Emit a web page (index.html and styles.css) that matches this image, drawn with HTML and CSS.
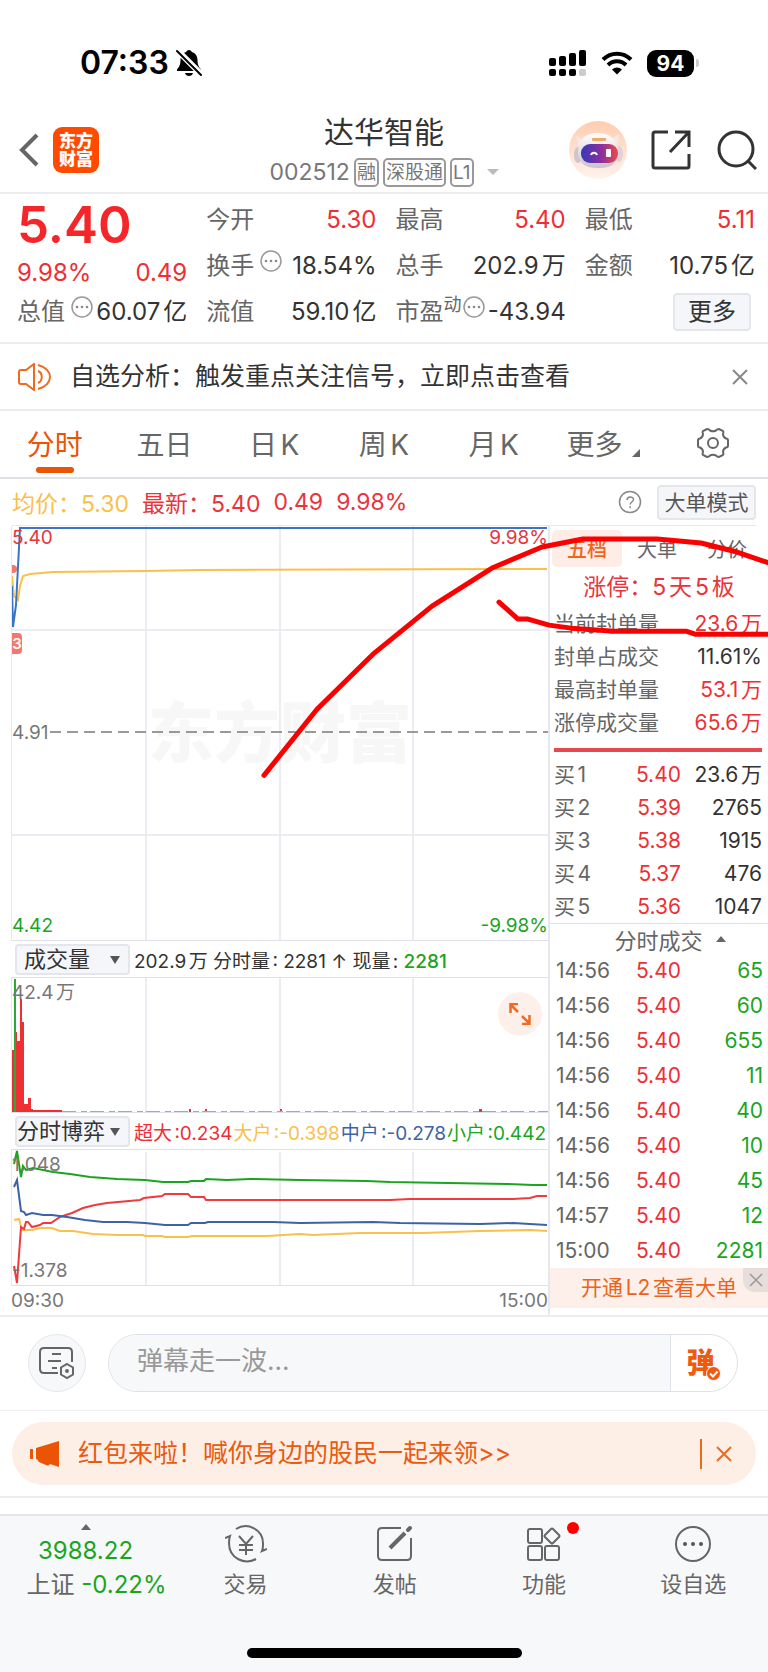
FILE: index.html
```html
<!DOCTYPE html>
<html lang="zh-CN">
<head>
    <meta charset="UTF-8">
    <meta name="viewport" content="width=device-width, initial-scale=1.0">
    <title>达华智能 002512</title>
    <link rel="stylesheet" href="styles.css">
</head>
<body>
    <div class="status-bar">
        <div class="status-left">
            <span class="clock">07:33</span>
            <svg width="26" height="28" viewBox="0 0 26 28">
                <path d="M13 1c-1.500 0-2.500 1-2.800 2C6.500 4 4.500 7 4.500 11c0 5-1.500 7-3.500 9.500V22h24v-1.500C23 18 21.500 16 21.500 11c0-4-2-7-5.700-8C15.500 2 14.500 1 13 1zM9 24h8c-.5 2-2 3-4 3s-3.500-1-4-3z"/>
                <path d="M0 0l26 26" stroke="#fff" stroke-width="6"/>
                <path d="M1 2l24 24" stroke="#000" stroke-width="2" stroke-linecap="round"/>
            </svg>
        </div>
        <div class="status-right">
            <svg width="38" height="28" viewBox="0 0 38 28">
                <rect x="0" y="9" width="7" height="8" rx="2"/>
                <rect x="10" y="7" width="7" height="10" rx="2"/>
                <rect x="20" y="4" width="7" height="13" rx="2"/>
                <rect x="30" y="1" width="7" height="16" rx="2"/>
                <rect x="0" y="20" width="7" height="7" rx="2"/>
                <rect x="10" y="20" width="7" height="7" rx="2"/>
                <rect x="20" y="20" width="7" height="7" rx="2"/>
                <rect x="30" y="20" width="7" height="7" rx="2" fill="#ccc"/>
            </svg>
            <svg class="wifi" width="32" height="24" viewBox="0 0 32 24" fill="none" stroke="#000" stroke-width="4">
                <path d="M2 8.500C10 .7 22 .7 30 8.500"/>
                <path d="M7 14c5-5 13-5 18 0"/>
                <path d="M16 23.500l-5-5c3-2.700 7-2.700 10 0z" fill="#000" stroke="none"/>
            </svg>
            <span class="battery">94</span>
            <span class="battery-tip"></span>
        </div>
    </div>

    <header class="header">
        <div class="header-left">
            <button class="icon-btn" aria-label="返回">
                <svg width="20" height="34" viewBox="0 0 20 34" fill="none" stroke="#666" stroke-width="4"><path d="M18 2L3 17l15 15"/></svg>
            </button>
            <span class="logo">东方<br>财富</span>
        </div>
        <div class="header-title">
            <h1>达华智能</h1>
            <div class="stock-code">
                <span>002512</span>
                <span class="tag">融</span>
                <span class="tag">深股通</span>
                <span class="tag">L1</span>
                <span class="caret"></span>
            </div>
        </div>
        <div class="header-right">
            <button class="icon-btn" aria-label="助手">
                <svg width="58" height="58" viewBox="0 0 58 58">
                    <defs>
                        <linearGradient id="halo" x1="0" y1="0" x2="0" y2="1"><stop offset="0" stop-color="#ffcdb0"/><stop offset="1" stop-color="#fff3ec"/></linearGradient>
                        <linearGradient id="visor"><stop offset="0" stop-color="#3a38b8"/><stop offset=".55" stop-color="#8a2f9e"/><stop offset="1" stop-color="#ee4a4a"/></linearGradient>
                        <linearGradient id="shell" x1="0" y1="0" x2="0" y2="1"><stop offset="0" stop-color="#fff"/><stop offset="1" stop-color="#c9c3cc"/></linearGradient>
                    </defs>
                    <circle cx="29" cy="29" r="29" fill="url(#halo)"/>
                    <path d="M7 15l9 4-7 6zM50 13l-8 5 7 6z" fill="#f4e7e4"/>
                    <ellipse cx="9" cy="34" rx="4" ry="8" fill="#cfc4ca"/>
                    <ellipse cx="50" cy="33" rx="4" ry="8" fill="#ddd3d8"/>
                    <path d="M9 31C9 17 18 12 29 12s20 6 20 19-8 16-20 16S9 43 9 31z" fill="url(#shell)"/>
                    <rect x="23" y="17" width="14" height="3" rx="1" fill="#f0a867"/>
                    <rect x="12" y="23" width="37" height="19" rx="9" fill="url(#visor)"/>
                    <path d="M22 34c1-3 5-3 6 0" fill="none" stroke="#fff" stroke-width="2"/>
                    <rect x="37" y="28" width="5" height="8" rx="1" fill="#fff"/>
                </svg>
            </button>
            <button class="icon-btn" aria-label="分享">
                <svg width="40" height="40" viewBox="0 0 40 40" fill="none" stroke="#333" stroke-width="3">
                    <path d="M17 2H4q-2 0-2 2v32q0 2 2 2h32q2 0 2-2V24M19 22L37 3M24 2h14v15"/>
                </svg>
            </button>
            <button class="icon-btn" aria-label="搜索">
                <svg width="40" height="40" viewBox="0 0 40 40" fill="none" stroke="#333" stroke-width="3">
                    <circle cx="19" cy="19" r="17"/><path d="M31 31l8 8"/>
                </svg>
            </button>
        </div>
    </header>

    <section class="quote">
        <div class="quote-col">
            <div class="price">5.40</div>
            <div class="quote-row change"><span>9.98%</span><span>0.49</span></div>
            <div class="quote-row">
                <span class="name">总值<svg class="info" viewBox="0 0 22 22"><use href="#more"/></svg></span><span>60.07亿</span>
            </div>
        </div>
        <div class="quote-col">
            <div class="quote-row"><span class="name">今开</span><span class="up">5.30</span></div>
            <div class="quote-row"><span class="name">换手<svg class="info gap" viewBox="0 0 22 22"><use href="#more"/></svg></span><span>18.54%</span></div>
            <div class="quote-row"><span class="name">流值</span><span>59.10亿</span></div>
        </div>
        <div class="quote-col">
            <div class="quote-row"><span class="name">最高</span><span class="up">5.40</span></div>
            <div class="quote-row"><span class="name">总手</span><span>202.9万</span></div>
            <div class="quote-row"><span class="name">市盈<small>动</small><svg class="info tight" viewBox="0 0 22 22"><use href="#more"/></svg></span><span>-43.94</span></div>
        </div>
        <div class="quote-col">
            <div class="quote-row"><span class="name">最低</span><span class="up">5.11</span></div>
            <div class="quote-row"><span class="name">金额</span><span>10.75亿</span></div>
            <div class="quote-row quote-more"><button class="btn more-btn">更多</button></div>
        </div>
    </section>

    <svg class="defs">
        <symbol id="more" viewBox="0 0 22 22">
            <circle cx="11" cy="11" r="10" fill="none" stroke="#999" stroke-width="1.500"/>
            <circle cx="6" cy="11" r="1.300" fill="#888"/><circle cx="11" cy="11" r="1.300" fill="#888"/><circle cx="16" cy="11" r="1.300" fill="#888"/>
        </symbol>
    </svg>

    <div class="notice">
        <svg width="34" height="28" viewBox="0 0 34 28" fill="none" stroke="#ee6a1f" stroke-width="2">
            <path d="M16 1v26L8 21H3q-2 0-2-2V9q0-2 2-2h5z"/>
            <path d="M20 8c5 2 5 10 0 12M20 2c16 4 16 20 0 24"/>
        </svg>
        <p>自选分析：触发重点关注信号，立即点击查看</p>
        <button class="icon-btn" aria-label="关闭">
            <svg width="16" height="16" viewBox="0 0 16 16" stroke="#888" stroke-width="2"><path d="M1 1l14 14M15 1L1 15"/></svg>
        </button>
    </div>

    <nav class="tabs">
        <button class="tab active">分时</button>
        <button class="tab">五日</button>
        <button class="tab">日K</button>
        <button class="tab">周K</button>
        <button class="tab">月K</button>
        <button class="tab">更多<span class="corner"></span></button>
        <button class="tab" aria-label="设置">
            <svg width="32" height="32" viewBox="0 0 32 32" fill="none" stroke="#666" stroke-width="2">
                <path d="M10 2q2 0 3 1.500 3 1.500 6 0Q20 2 22 2l4 2q1 1 0 3 0 3 3 4.500 2 0 2 2v5q0 2-2 2-3 1.500-3 4.500 1 2 0 3l-4 2q-2 0-3-1.500-3-1.500-6 0Q12 30 10 30l-4-2q-1-1 0-3 0-3-3-4.500-2 0-2-2v-5q0-2 2-2Q6 10 6 7 5 5 6 4z"/>
                <circle cx="16" cy="16" r="5"/>
            </svg>
        </button>
    </nav>

    <div class="avg-line">
        <span class="avg">均价：5.30</span>
        <span class="latest">最新：5.40</span>
        <span class="latest">0.49</span>
        <span class="latest">9.98%</span>
        <span class="avg-tools">
            <button class="icon-btn" aria-label="帮助">
                <svg width="24" height="24" viewBox="0 0 24 24" fill="none" stroke="#888" stroke-width="1.500">
                    <circle cx="12" cy="12" r="10.500"/>
                    <path d="M9 10c0-4 6.500-4 6.500-.5 0 2.500-3.300 2.500-3.300 5M12.200 16.200v2"/>
                </svg>
            </button>
            <button class="btn mode-btn">大单模式</button>
        </span>
    </div>

    <main class="market">
        <div class="charts">
            <div class="chart price-chart">
                <span class="watermark">东方财富</span>
                <svg class="plot" viewBox="0 0 536 414" preserveAspectRatio="none" fill="none">
                    <path d="M134 0V414M268 0V414M401 0V414M0 104H536M0 309H536" stroke="#e6e7f0" stroke-width="1.500"/>
                    <path d="M38 206H536" stroke="#999" stroke-width="2" stroke-dasharray="11 6"/>
                    <circle cx="1" cy="43" r="4" fill="#f4766c"/>
                    <polyline points="0,50 2,70 6,74 8,60 11,50 18,48 41,46 133,45 188,44 535,43" stroke="#fac04c" stroke-width="2"/>
                    <polyline points="0,60 1,101 4,79 8,2 535,2" stroke="#3a75c4" stroke-width="2"/>
                </svg>
                <span class="axis top left up">5.40</span>
                <span class="axis top right up">9.98%</span>
                <span class="axis middle left">4.91</span>
                <span class="axis bottom left down">4.42</span>
                <span class="axis bottom right down">-9.98%</span>
                <span class="buy-mark">3</span>
            </div>

            <div class="chart-head">
                <span class="picker"><select aria-label="指标一"><option>成交量</option></select></span>
                <span>202.9万 分时量: 2281 ↑ 现量: <b class="down">2281</b></span>
            </div>
            <div class="chart volume-chart">
                <svg class="plot" viewBox="0 0 536 134" preserveAspectRatio="none">
                    <path d="M134 0V134M268 0V134M401 0V134" stroke="#e6e7f0" stroke-width="1.500"/>
                    <g fill="#ef2f33">
                        <rect x="0" y="72" width="2" height="62"/>
                        <rect x="3" y="54" width="2" height="80"/>
                        <rect x="5" y="63" width="3" height="71"/>
                        <rect x="8" y="21" width="2" height="113"/>
                        <rect x="10" y="44" width="2" height="90"/>
                        <rect x="12" y="126" width="4" height="8"/>
                        <rect x="16" y="120" width="3" height="14"/>
                        <rect x="19" y="131" width="2" height="3"/>
                        <rect x="21" y="132" width="29" height="2"/>
                        <rect x="177" y="131" width="2" height="3"/>
                        <rect x="193" y="131" width="2" height="3"/>
                        <rect x="268" y="131" width="2" height="3"/>
                        <rect x="467" y="131" width="3" height="3"/>
                    </g>
                    <path d="M50 133.500H536" stroke="#f0898b" stroke-dasharray="14 5 6 3"/>
                    <rect x="2" y="1" width="2" height="133" fill="#2ea836"/>
                </svg>
                <span class="axis high left">42.4万</span>
                <button class="expand" aria-label="放大">
                    <svg width="22" height="22" viewBox="0 0 22 22" fill="none" stroke="#f06a24" stroke-width="2.500">
                        <path d="M9 1H1.500v9M2 2l7 7M13 21h7.500v-9M20 20l-7-7"/>
                    </svg>
                </button>
            </div>

            <div class="chart-head">
                <span class="picker wide"><select aria-label="指标二"><option>分时博弈</option></select></span>
                <span class="flows">
                    <span class="up">超大:0.234</span>
                    <span class="big">大户:-0.398</span>
                    <span class="mid">中户:-0.278</span>
                    <span class="down">小户:0.442</span>
                </span>
            </div>
            <div class="chart flow-chart">
                <svg class="plot" viewBox="0 0 536 135" preserveAspectRatio="none">
                    <path d="M134 2V135M268 2V135M401 2V135" stroke="#e6e7f0" stroke-width="1.500"/>
                    <g fill="none" stroke-width="2">
                        <polyline stroke="#fac04c" points="2,70 7,69 10,80 20,80 28,78 40,78 48,81 61,81 81,84 105,85 131,85 133,86 150,86 153,87 176,87 180,86 255,86 288,84 301,85 348,83 375,83 411,83 468,81 518,80 535,81"/>
                        <polyline stroke="#ef3a3e" points="2,116 5,133 9,77 12,79 14,72 16,72 20,77 28,75 31,73 39,73 48,67 60,63 71,58 83,55 95,53 128,50 132,48 150,46 153,44 176,44 179,47 192,47 194,50 288,50 378,50 398,49 501,49 518,48 525,46 535,46"/>
                        <polyline stroke="#3d62a5" points="2,37 5,30 9,61 12,62 14,65 20,63 31,65 40,65 55,67 73,70 91,72 115,72 133,73 153,75 176,75 179,73 193,73 196,72 261,72 288,73 361,72 388,73 468,74 501,73 535,75"/>
                        <polyline stroke="#1ba51f" points="2,14 5,1 9,27 11,16 14,20 21,18 41,22 58,24 78,27 105,29 133,30 151,32 176,32 179,31 192,31 194,29 215,30 238,29 288,30 355,31 378,32 495,34 521,35 535,35"/>
                    </g>
                </svg>
                <span class="axis high left">1.048</span>
                <span class="axis bottom left">-1.378</span>
            </div>
            <div class="times"><span>09:30</span><span>15:00</span></div>
        </div>

        <aside class="side">
            <div class="side-tabs">
                <button class="side-tab active">五档</button>
                <button class="side-tab">大单</button>
                <button class="side-tab">分价</button>
            </div>
            <div class="streak">涨停：5天5板</div>
            <table class="side-table seal">
                <tr><td>当前封单量</td><td class="up">23.6万</td></tr>
                <tr><td>封单占成交</td><td>11.61%</td></tr>
                <tr><td>最高封单量</td><td class="up">53.1万</td></tr>
                <tr><td>涨停成交量</td><td class="up">65.6万</td></tr>
            </table>
            <div class="bar"></div>
            <table class="side-table bids">
                <tr><td>买1</td><td class="up">5.40</td><td>23.6万</td></tr>
                <tr><td>买2</td><td class="up">5.39</td><td>2765</td></tr>
                <tr><td>买3</td><td class="up">5.38</td><td>1915</td></tr>
                <tr><td>买4</td><td class="up">5.37</td><td>476</td></tr>
                <tr><td>买5</td><td class="up">5.36</td><td>1047</td></tr>
            </table>
            <button class="trades-head">分时成交<span class="caret-up"></span></button>
            <table class="side-table trades">
                <tr><td>14:56</td><td class="up">5.40</td><td class="down">65</td></tr>
                <tr><td>14:56</td><td class="up">5.40</td><td class="down">60</td></tr>
                <tr><td>14:56</td><td class="up">5.40</td><td class="down">655</td></tr>
                <tr><td>14:56</td><td class="up">5.40</td><td class="down">11</td></tr>
                <tr><td>14:56</td><td class="up">5.40</td><td class="down">40</td></tr>
                <tr><td>14:56</td><td class="up">5.40</td><td class="down">10</td></tr>
                <tr><td>14:56</td><td class="up">5.40</td><td class="down">45</td></tr>
                <tr><td>14:57</td><td class="up">5.40</td><td class="down">12</td></tr>
                <tr><td>15:00</td><td class="up">5.40</td><td class="down">2281</td></tr>
            </table>
            <div class="level2">
                <a href="#">开通L2查看大单</a>
                <button class="level2-close" aria-label="关闭">
                    <svg width="14" height="14" viewBox="0 0 14 14" stroke="#999" stroke-width="1.500"><path d="M1 1l12 12M13 1L1 13"/></svg>
                </button>
            </div>
        </aside>

        <!-- hand-drawn marker strokes -->
        <svg class="marker" viewBox="0 0 768 788" preserveAspectRatio="none" fill="none" stroke="#fb0000" stroke-width="5" stroke-linecap="round" stroke-linejoin="round">
            <polyline points="264,249 317,183 373,128 432,80 492,42 542,21 583,13 657,13 701,17 737,26 772,38"/>
            <polyline points="499,76 518,93 528,93 549,99 571,102 614,105 686,105 695,108 772,108"/>
        </svg>
    </main>

    <div class="comment">
        <button class="round-btn" aria-label="弹幕设置">
            <svg width="36" height="34" viewBox="0 0 36 34" fill="none" stroke="#666" stroke-width="2">
                <path d="M33 16V6q0-4-4-4H5Q1 2 1 6v17q0 4 4 4h14M13 8h9M9 15h13M13 22h5" />
                <path d="M28 18l6 3.500v7L28 32l-6-3.500v-7z"/><circle cx="28" cy="25" r="1" />
            </svg>
        </button>
        <div class="comment-box">
            <input type="text" placeholder="弹幕走一波..." aria-label="弹幕">
            <button class="danmu" aria-label="弹幕开关">弹<svg width="15" height="15" viewBox="0 0 15 15"><circle cx="7.500" cy="7.500" r="7" fill="#ee5a12" stroke="#fff"/><path d="M4 7.500l3 3 4.500-5" fill="none" stroke="#fff" stroke-width="2"/></svg></button>
        </div>
    </div>

    <div class="promo-wrap">
        <div class="promo">
            <svg width="30" height="26" viewBox="0 0 30 26" fill="#ea5404">
                <path d="M0 8h3v10H0zM6 7L29 0v26l-9-3q-1 2-3 1.500L9 21q-1-.5-1-2l-2-1z"/>
            </svg>
            <a href="#">红包来啦！喊你身边的股民一起来领&gt;&gt;</a>
            <button class="icon-btn promo-close" aria-label="关闭">
                <svg width="16" height="16" viewBox="0 0 16 16" stroke="#ee6a1f" stroke-width="2"><path d="M1 1l14 14M15 1L1 15"/></svg>
            </button>
        </div>
    </div>

    <footer class="footer">
        <nav class="bottom-nav">
            <button class="index">
                <span class="caret-up"></span>
                <span class="index-value down">3988.22</span>
                <span class="index-change">上证 <span class="down">-0.22%</span></span>
            </button>
            <button class="nav-item">
                <svg width="42" height="38" viewBox="0 0 42 38" fill="none" stroke="#666" stroke-width="2">
                    <path d="M11 4C22-3 39 4 38 20q0 4-1 6l5-2M31 34C20 40 4 34 4 18q0-4 1-7L0 13"/>
                    <path d="M14 11l7 8 7-8M14 20h14M14 25h14M21 19v11"/>
                </svg>
                <span>交易</span>
            </button>
            <button class="nav-item">
                <svg width="38" height="38" viewBox="0 0 38 38" fill="none" stroke="#666" stroke-width="2">
                    <path d="M25 3H6Q2 3 2 7v24q0 4 4 4h25q4 0 4-4V13"/>
                    <path d="M14 23L29 8" stroke-width="4"/><path d="M32 5l2-2" stroke-width="4" stroke-linecap="round"/>
                </svg>
                <span>发帖</span>
            </button>
            <button class="nav-item">
                <svg width="38" height="38" viewBox="0 0 38 38" fill="none" stroke="#666" stroke-width="2">
                    <rect x="3" y="4" width="14" height="14" rx="2"/><rect x="3" y="21" width="14" height="14" rx="2"/><rect x="20" y="21" width="14" height="14" rx="2"/>
                    <path d="M26 4q1-1 2 0l6 6q1 1 0 2l-6 6q-1 1-2 0l-6-6q-1-1 0-2z"/>
                </svg>
                <span>功能</span>
                <i class="dot"></i>
            </button>
            <button class="nav-item">
                <svg width="38" height="38" viewBox="0 0 38 38">
                    <circle cx="19" cy="19" r="17" fill="none" stroke="#666" stroke-width="2"/>
                    <g fill="#555"><circle cx="11" cy="19" r="2"/><circle cx="19" cy="19" r="2"/><circle cx="27" cy="19" r="2"/></g>
                </svg>
                <span>设自选</span>
            </button>
        </nav>
        <div class="home-bar"></div>
    </footer>
</body>
</html>
```

FILE: styles.css
```css
* {
    box-sizing: border-box;
}
body {
    margin: 0;
    background-color: #fff;
    color: #333;
    font-family: Inter, "Noto Sans CJK SC", sans-serif;
    font-size: 24px;
    text-autospace: normal;
}
button, input, select {
    font-family: inherit;
    font-size: inherit;
    color: inherit;
    text-autospace: inherit;
}
button {
    border: none;
    background: none;
    padding: 0;
    cursor: pointer;
}
svg {
    display: block;
    flex: none;
}
a {
    color: inherit;
    text-decoration: none;
}
h1, p {
    margin: 0;
    font-weight: normal;
}
.up {
    color: #ee2f34;
}
.down {
    color: #1ba51f;
}
.defs {
    position: absolute;
    width: 0;
    height: 0;
}
.icon-btn {
    display: flex;
}

/* status bar */
.status-bar {
    display: flex;
    justify-content: space-between;
    padding: 43px 69px 0 80px;
    height: 102px;
    color: #000;
}
.status-left, .status-right {
    display: flex;
    align-items: center;
    height: 40px;
}
.status-left {
    gap: 7px;
}
.clock {
    font-size: 32px;
    line-height: 40px;
    font-weight: 600;
}
.wifi {
    margin: 0 14px;
}
.battery {
    width: 47px;
    border-radius: 9px;
    background-color: #000;
    color: #fff;
    font-size: 21px;
    line-height: 27px;
    font-weight: 700;
    text-align: center;
}
.battery-tip {
    width: 3px;
    height: 8px;
    margin-left: 2px;
    border-radius: 0 3px 3px 0;
    background-color: #ccc;
}

/* header */
.header {
    display: grid;
    grid-template-columns: 1fr auto 1fr;
    padding: 8px 0 2px;
    border-bottom: 2px solid #ededf0;
}
.header-left, .header-right {
    display: flex;
    align-items: center;
}
.header-left {
    gap: 14px;
    padding-left: 19px;
}
.header-right {
    justify-content: flex-end;
    gap: 24px;
    padding-right: 11px;
}
.header-right .icon-btn:last-child {
    margin-left: 2px;
}
.logo {
    padding: 5px 0;
    width: 46px;
    border-radius: 9px;
    background-color: #ff4a00;
    color: #fff;
    font-size: 17px;
    line-height: 18px;
    font-weight: 900;
    text-align: center;
}
.header-title {
    text-align: center;
}
.header-title h1 {
    font-size: 30px;
    line-height: 44px;
}
.stock-code {
    display: flex;
    align-items: center;
    gap: 4px;
    height: 36px;
    color: #777;
    font-size: 23px;
}
.tag {
    padding: 0 1px;
    border: 2px solid #999;
    border-radius: 5px;
    font-size: 19px;
    line-height: 25px;
}
.caret {
    margin-left: 9px;
    border: 6px solid transparent;
    border-top-color: #bbb;
    border-bottom: none;
}

/* quote */
.quote {
    display: grid;
    grid-template-columns: repeat(4, 1fr);
    gap: 19px;
    padding: 3px 13px 7px 17px;
    border-bottom: 2px solid #ededf0;
}
.price {
    color: #f5262a;
    font-size: 51px;
    line-height: 56px;
    font-weight: 600;
}
.quote-row {
    display: flex;
    justify-content: space-between;
    align-items: center;
    height: 46px;
    line-height: 46px;
    white-space: nowrap;
}
.quote-row.change {
    height: 36px;
    padding-top: 4px;
    color: #ee2f34;
}
.name {
    display: flex;
    color: #666;
}
.name small {
    font-size: 18px;
    line-height: 32px;
}
.info {
    width: 22px;
    height: 22px;
    margin: 7px 0 0 6px;
}
.info.tight {
    margin-left: 1px;
}
.quote-more {
    justify-content: flex-end;
}
.btn {
    border: 2px solid #e4e6ec;
    border-radius: 4px;
    background-color: #f5f6f9;
}
.more-btn {
    width: 78px;
    line-height: 34px;
    margin-right: 4px;
}

/* notice */
.notice {
    display: flex;
    align-items: center;
    padding: 0 20px 0 18px;
    border-bottom: 2px solid #ededf0;
    font-size: 25px;
    line-height: 65px;
}
.notice p {
    flex: 1;
    margin-left: 18px;
}

/* period tabs */
.tabs {
    display: grid;
    grid-template-columns: repeat(7, 1fr);
    border-bottom: 2px solid #dfe1e6;
    color: #666;
    font-size: 28px;
}
.tab {
    position: relative;
    display: flex;
    justify-content: center;
    align-items: center;
    height: 66px;
    padding-bottom: 2px;
}
.tab.active {
    color: #ea5404;
}
.tab.active::after {
    content: "";
    position: absolute;
    bottom: 4px;
    width: 38px;
    height: 6px;
    border-radius: 3px;
    background-color: #ea5404;
}
.corner {
    align-self: flex-end;
    margin: 0 0 18px 10px;
    border: 4px solid #666;
    border-top-color: transparent;
    border-left-color: transparent;
}

/* average price line */
.avg-line {
    display: flex;
    align-items: center;
    gap: 13px;
    margin: 0 12px;
    height: 47px;
    border-bottom: 1px solid #e6e7f0;
    font-size: 23px;
}
.avg {
    color: #fac04c;
}
.latest {
    color: #e8343a;
}
.avg-tools {
    display: flex;
    align-items: center;
    gap: 15px;
    margin-left: auto;
}
.mode-btn {
    width: 99px;
    color: #555;
    font-size: 21px;
    line-height: 31px;
}

/* market area */
.market {
    position: relative;
    display: grid;
    grid-template-columns: 1fr 220px;
    padding-left: 11px;
    border-bottom: 2px solid #ededf0;
    overflow: hidden;
}
.marker {
    position: absolute;
    top: 0;
    left: 0;
    width: 100%;
    height: 100%;
    pointer-events: none;
}
.chart {
    position: relative;
    overflow: hidden;
    border-left: 1px solid #e6e7f0;
    border-bottom: 1px solid #dfe1e8;
}
.price-chart {
    height: 415px;
}
.volume-chart {
    height: 135px;
}
.flow-chart {
    height: 136px;
}
.plot {
    position: relative;
    width: 100%;
    height: 100%;
}
.axis {
    position: absolute;
    color: #777;
    font-size: 19px;
    line-height: 24px;
}
.axis.up {
    color: #e8343a;
}
.axis.down {
    color: #1ba51f;
}
.left {
    left: 0;
}
.right {
    right: 0;
}
.top {
    top: 0;
}
.high {
    top: 3px;
}
.middle {
    top: 50%;
    margin-top: -12px;
}
.bottom {
    bottom: 2px;
}
.watermark {
    position: absolute;
    top: 159px;
    left: 0;
    right: 0;
    color: #f7f7f8;
    font-size: 66px;
    line-height: 96px;
    font-weight: 900;
    text-align: center;
}
.buy-mark {
    position: absolute;
    top: 107px;
    left: 0;
    width: 10px;
    border-radius: 0 4px 4px 0;
    background-color: #f4766c;
    color: #fff;
    font-size: 15px;
    line-height: 21px;
    font-weight: 600;
    text-align: center;
}
.chart-head {
    display: flex;
    align-items: center;
    gap: 4px;
    height: 37px;
    padding-left: 4px;
    border-bottom: 1px solid #dfe1e8;
    font-size: 19px;
    white-space: nowrap;
}
.chart-head b {
    font-weight: 500;
}
.picker {
    position: relative;
    flex: none;
}
.picker::after {
    content: "";
    position: absolute;
    top: 12px;
    right: 10px;
    border: 5px solid transparent;
    border-top: 8px solid #555;
    border-bottom: none;
    pointer-events: none;
}
.picker select {
    appearance: none;
    display: block;
    width: 115px;
    height: 31px;
    padding: 0 0 0 7px;
    border: 2px solid #e4e6ec;
    border-radius: 4px;
    background-color: #f5f6f9;
    font-size: 22px;
}
.picker.wide select {
    padding-left: 0;
}
.flows {
    display: flex;
    flex: 1;
    justify-content: space-between;
    padding-right: 2px;
}
.big {
    color: #fac04c;
}
.mid {
    color: #3d62a5;
}
.expand {
    position: absolute;
    top: 14px;
    right: 6px;
    display: grid;
    place-items: center;
    width: 44px;
    height: 44px;
    border-radius: 50%;
    background-color: #fdf0ea;
}
.times {
    display: flex;
    justify-content: space-between;
    color: #777;
    font-size: 19px;
    line-height: 29px;
}

/* side panel */
.side {
    border-left: 2px solid #e6e7f0;
    font-size: 21px;
}
.side-tabs {
    display: flex;
    padding: 4px 6px 0 2px;
    color: #666;
    font-size: 20px;
}
.side-tab {
    flex: 1;
    height: 37px;
    border-radius: 5px;
}
.side-tab.active {
    background-color: #fdede6;
    color: #f2641c;
    font-weight: 500;
}
.streak {
    color: #e8343a;
    font-size: 23px;
    line-height: 40px;
    text-align: center;
}
.side-table {
    width: 100%;
    border-collapse: collapse;
    table-layout: fixed;
    line-height: 33px;
}
.side-table td {
    padding: 0;
    text-align: right;
}
.side-table td:first-child {
    padding-left: 4px;
    color: #666;
    text-align: left;
}
.side-table td:last-child {
    padding-right: 6px;
}
.seal td:first-child {
    width: 120px;
}
.bids td:first-child, .trades td:first-child {
    width: 70px;
}
.bids td:nth-child(2), .trades td:nth-child(2) {
    width: 61px;
}
.bar {
    height: 4px;
    margin: 9px 6px 6px 4px;
    background-color: #e5484d;
}
.trades-head {
    display: flex;
    justify-content: center;
    align-items: center;
    gap: 13px;
    width: 100%;
    height: 30px;
    padding-left: 22px;
    border-top: 1px solid #dfe1e8;
    color: #666;
    font-size: 22px;
}
.caret-up {
    border: 5px solid transparent;
    border-top: none;
    border-bottom: 6px solid #666;
}
.trades {
    line-height: 35px;
}
.side-table.trades td:first-child {
    padding-left: 6px;
}
.side-table.trades td:last-child {
    padding-right: 5px;
}
.level2 {
    position: relative;
    margin-bottom: 4px;
    background-color: #fdf0ea;
    color: #ea6420;
    line-height: 40px;
    text-align: center;
}
.level2-close {
    position: absolute;
    top: 0;
    right: 0;
    display: grid;
    place-items: center;
    width: 25px;
    height: 24px;
    border-radius: 0 0 0 12px;
    background-color: #e7dedc;
}

/* comment bar */
.comment {
    display: flex;
    gap: 22px;
    padding: 17px 30px 18px 28px;
    border-bottom: 1px solid #f2f2f4;
}
.round-btn {
    display: grid;
    place-items: center;
    width: 58px;
    height: 58px;
    border: 1px solid #e4e6ec;
    border-radius: 50%;
    background-color: #f7f8fa;
}
.comment-box {
    display: flex;
    flex: 1;
    border: 1px solid #dfe1e8;
    border-radius: 29px;
    overflow: hidden;
}
.comment-box input {
    flex: 1;
    min-width: 0;
    padding: 0 28px 5px;
    border: none;
    background-color: #f7f8fa;
    font-size: 26px;
    text-autospace: no-autospace;
}
.comment-box input::placeholder {
    color: #999;
}
.danmu {
    position: relative;
    width: 67px;
    padding: 0 7px 4px 0;
    border-left: 1px solid #dfe1e8;
    color: #ee5a12;
    font-size: 28px;
    font-weight: 900;
}
.danmu svg {
    position: absolute;
    right: 16px;
    bottom: 10px;
}

/* promo */
.promo-wrap {
    padding: 11px 12px;
    border-bottom: 2px solid #ededf0;
}
.promo {
    display: flex;
    align-items: center;
    padding: 0 24px 0 18px;
    border-radius: 32px;
    background-color: #fdeee6;
    color: #ea5a10;
    font-size: 25px;
    line-height: 63px;
}
.promo a {
    flex: 1;
    margin-left: 18px;
}
.promo-close {
    padding: 7px 0 7px 14px;
    border-left: 2px solid #ee6a1f;
}

/* bottom nav */
.footer {
    margin-top: 16px;
    padding-bottom: 15px;
    border-top: 2px solid #e4e5ec;
    background-color: #f7f8fa;
}
.bottom-nav {
    display: flex;
    color: #666;
}
.index {
    display: flex;
    flex-direction: column;
    align-items: center;
    width: 171px;
    padding-top: 8px;
    line-height: 34px;
}
.index-value {
    margin-top: 4px;
}
.index-change {
    padding-left: 22px;
}
.nav-item {
    position: relative;
    display: flex;
    flex: 1;
    flex-direction: column;
    align-items: center;
    gap: 5px;
    padding-top: 9px;
    font-size: 22px;
    line-height: 32px;
}
.dot {
    position: absolute;
    top: 6px;
    left: 50%;
    width: 12px;
    height: 12px;
    margin-left: 23px;
    border-radius: 50%;
    background-color: #f00;
}
.home-bar {
    width: 275px;
    height: 10px;
    margin: 46px auto 0;
    border-radius: 5px;
    background-color: #000;
}
```
